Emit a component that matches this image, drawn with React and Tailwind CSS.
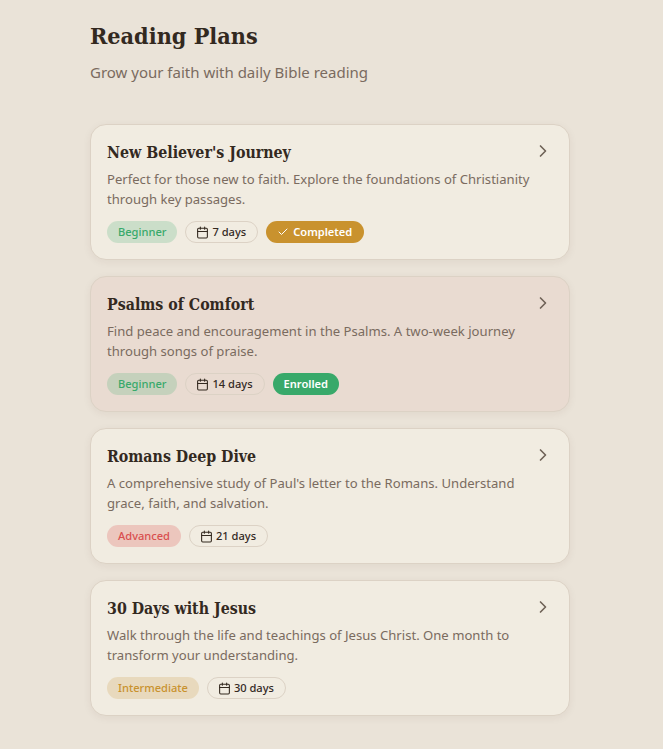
import { Calendar, Check, ChevronRight } from 'lucide-react'

const PLANS = [
  {
    title: "New Believer's Journey",
    description: 'Perfect for those new to faith. Explore the foundations of Christianity through key passages.',
    level: 'Beginner',
    days: '7 days',
    status: 'completed',
  },
  {
    title: 'Psalms of Comfort',
    description: 'Find peace and encouragement in the Psalms. A two-week journey through songs of praise.',
    level: 'Beginner',
    days: '14 days',
    status: 'enrolled',
  },
  {
    title: 'Romans Deep Dive',
    description: "A comprehensive study of Paul's letter to the Romans. Understand grace, faith, and salvation.",
    level: 'Advanced',
    days: '21 days',
  },
  {
    title: '30 Days with Jesus',
    description: 'Walk through the life and teachings of Jesus Christ. One month to transform your understanding.',
    level: 'Intermediate',
    days: '30 days',
  },
]

const LEVEL_STYLES = {
  Beginner: 'bg-[#38a96a]/20 text-[#38a96a]',
  Advanced: 'bg-[#e05252]/25 text-[#d94f4f]',
  Intermediate: 'bg-[#c9922e]/20 text-[#c9922e]',
}

function PlanCard({ plan }) {
  const enrolled = plan.status === 'enrolled'
  return (
    <div className={`h-[136px] rounded-2xl border border-[#dcd2c5] px-4 pt-4 shadow-[0_2px_8px_rgba(60,40,20,0.06)] ${enrolled ? 'bg-[#e9dbd1]' : 'bg-[#f1ece1]'}`}>
      <div className="flex items-start justify-between">
        <h3 className="font-['DejaVu_Serif_Condensed',serif] text-[15.8px] leading-[24px] font-bold text-[#33291f]">{plan.title}</h3>
        <ChevronRight className="h-5 w-5 text-[#6f6257]" strokeWidth={2} />
      </div>
      <p className="mt-[4px] pr-2 text-[13.1px] leading-[20px] text-[#7a6b5f]">{plan.description}</p>
      <div className="mt-[12px] flex items-center gap-2 text-[11.1px] leading-[16px] font-medium">
        <span className={`rounded-full px-[11px] py-[3px] ${LEVEL_STYLES[plan.level]}`}>{plan.level}</span>
        <span className="flex items-center gap-[3px] rounded-full border border-[#dcd2c5] py-[2px] pr-[11px] pl-[10px] text-[#33291f]">
          <Calendar className="h-[13px] w-[13px]" strokeWidth={2} />
          {plan.days}
        </span>
        {plan.status === 'completed' && (
          <span className="flex items-center gap-1 rounded-full bg-[#c9922e] py-[3px] pr-3 pl-[11px] font-semibold text-white">
            <Check className="h-3 w-3" strokeWidth={2} />
            Completed
          </span>
        )}
        {enrolled && (
          <span className="rounded-full bg-[#38a96a] px-[11px] py-[3px] font-semibold text-white">Enrolled</span>
        )}
      </div>
    </div>
  )
}

export default function App() {
  return (
    <div className="min-h-[749px] bg-[#eae3d8] font-['Noto_Sans',sans-serif]">
      <div className="mx-auto w-[660px] mr-[3px]">
        <div className="mx-auto w-[480px] pt-[19px] pb-[33px]">
          <h1 className="font-['DejaVu_Serif_Condensed',serif] text-[23.2px] leading-[34px] font-bold text-[#33291f]">Reading Plans</h1>
          <p className="mt-[7px] text-[15px] leading-[24px] text-[#7a6b5f]">Grow your faith with daily Bible reading</p>
          <div className="mt-[40px] flex flex-col gap-4">
            {PLANS.map((plan) => (
              <PlanCard key={plan.title} plan={plan} />
            ))}
          </div>
        </div>
      </div>
    </div>
  )
}
